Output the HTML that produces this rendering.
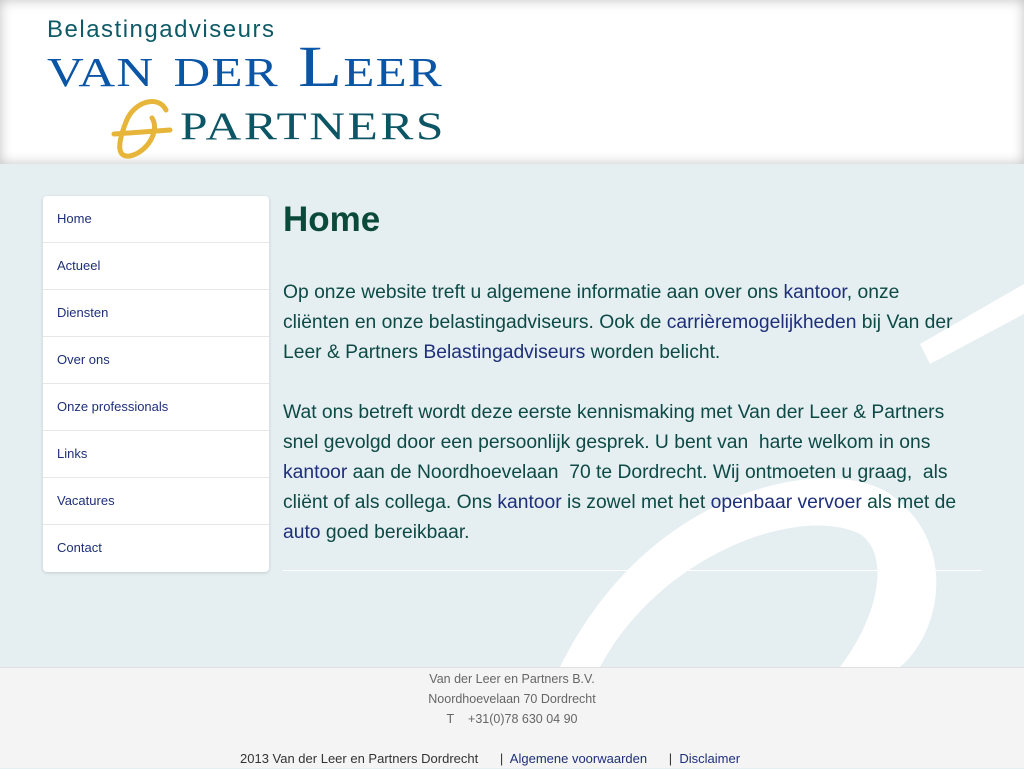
<!DOCTYPE html>
<html><head><meta charset="utf-8"><style>
*{margin:0;padding:0;box-sizing:border-box}
body{width:1024px;height:768px;overflow:hidden;font-family:"Liberation Sans",sans-serif;background:#e5eef1;position:relative}
.hdr{position:absolute;left:0;top:0;width:1024px;height:164px;background:#fff;box-shadow:inset 0 0 12px rgba(0,0,0,.25)}
.logo1{position:absolute;left:47px;top:16px;font-size:24px;color:#0e5a66;letter-spacing:1.5px}
.logo2{position:absolute;left:47px;top:38px;font-family:"Liberation Serif",serif;font-size:58px;color:#0a55a5;font-variant:small-caps;letter-spacing:1px;line-height:58px;transform-origin:0 0;transform:scaleX(1.24);white-space:nowrap}
.logo3{position:absolute;left:180px;top:92px;font-family:"Liberation Serif",serif;font-size:56px;color:#0c5565;font-variant:small-caps;letter-spacing:2px;line-height:58px;transform-origin:0 0;transform:scaleX(1.27);white-space:nowrap}
.nav{position:absolute;left:43px;top:196px;width:226px;background:#fff;border-radius:4px;box-shadow:0 1px 3px rgba(0,0,0,.15)}
.nav div{height:47px;line-height:46px;padding-left:14px;font-size:13px;color:#1e2f7a;border-bottom:1px solid #e4e8ea}
.nav div:last-child{border-bottom:none}
h1{position:absolute;left:283px;top:200px;font-size:35px;color:#0b4a3a;font-weight:bold}
.txt{position:absolute;left:283px;top:278px;width:720px;font-size:19.3px;line-height:30px;color:#0d4a45;white-space:nowrap}
.txt a{color:#1e2f7a;text-decoration:none}
.hr{position:absolute;left:283px;top:570px;width:699px;height:1px;background:#fff}
.ftr{position:absolute;left:0;top:667px;width:1024px;height:101px;background:#f4f4f4;border-top:1px solid #e0e0e0;text-align:center;font-size:12.5px;color:#666;line-height:20px;padding-top:1px}
.ftr .b{position:absolute;left:240px;top:81px;color:#333;white-space:pre;font-size:13px}
.ftr .b a{color:#1e2f7a;text-decoration:none}
</style></head><body>
<svg style="position:absolute;left:0;top:164px" width="1024" height="503">
<path d="M930 200 L1024 150 L1024 120 L920 180 Z" fill="#fff"/>
<path d="M560 503 C 650 320, 830 290, 890 330 C 960 380, 940 470, 900 503 L 840 503 C 880 450, 890 390, 860 370 C 800 340, 660 390, 600 503 Z" fill="#fff"/>
</svg>
<div class="hdr">
<div class="logo1">Belastingadviseurs</div>
<div class="logo2">van der Leer</div>
<svg style="position:absolute;left:108px;top:92px" width="70" height="70"><path d="M6 42 L62 38 M58 18 C50 2,25 10,18 30 C10 50,8 66,22 64 C40 60,52 38,44 26" stroke="#e7b53a" stroke-width="5" fill="none" stroke-linecap="round"/></svg>
<div class="logo3">partners</div>
</div>
<div class="nav"><div>Home</div><div>Actueel</div><div>Diensten</div><div>Over ons</div><div>Onze professionals</div><div>Links</div><div>Vacatures</div><div>Contact</div></div>
<h1>Home</h1>
<div class="txt">Op onze website treft u algemene informatie aan over ons <a>kantoor</a>, onze<br>cliënten en onze belastingadviseurs. Ook de <a>carrièremogelijkheden</a> bij Van der<br>Leer &amp; Partners <a>Belastingadviseurs</a> worden belicht.<br><br>Wat ons betreft wordt deze eerste kennismaking met Van der Leer &amp; Partners<br>snel gevolgd door een persoonlijk gesprek. U bent van&nbsp; harte welkom in ons<br><a>kantoor</a> aan de Noordhoevelaan&nbsp; 70 te Dordrecht. Wij ontmoeten u graag,&nbsp; als<br>cliënt of als collega. Ons <a>kantoor</a> is zowel met het <a>openbaar vervoer</a> als met de<br><a>auto</a> goed bereikbaar.</div>
<div class="hr"></div>
<div class="ftr">Van der Leer en Partners B.V.<br>Noordhoevelaan 70 Dordrecht<br>T&nbsp;&nbsp;&nbsp; +31(0)78 630 04 90
<div class="b">2013 Van der Leer en Partners Dordrecht      |  <a>Algemene voorwaarden</a>      |  <a>Disclaimer</a></div></div>
</body></html>
